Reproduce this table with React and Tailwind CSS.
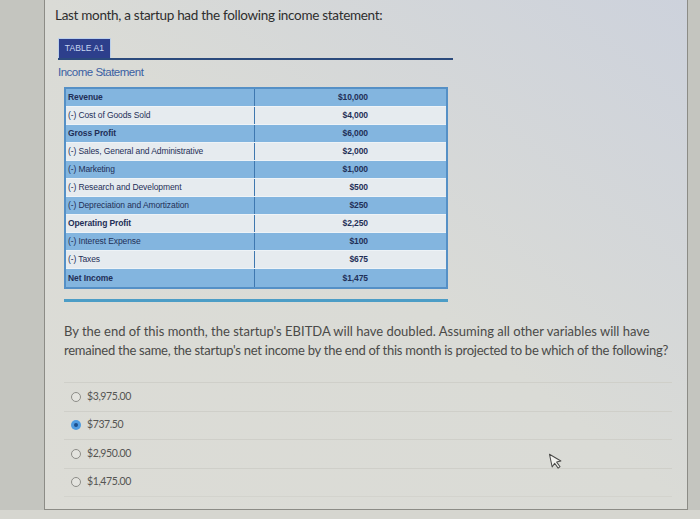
import React from 'react';

const rows = [
  { label: 'Revenue', value: '$10,000', blue: true, bold: true },
  { label: '(-) Cost of Goods Sold', value: '$4,000' },
  { label: 'Gross Profit', value: '$6,000', blue: true, bold: true },
  { label: '(-) Sales, General and Administrative', value: '$2,000' },
  { label: '(-) Marketing', value: '$1,000', blue: true },
  { label: '(-) Research and Development', value: '$500' },
  { label: '(-) Depreciation and Amortization', value: '$250', blue: true },
  { label: 'Operating Profit', value: '$2,250', bold: true },
  { label: '(-) Interest Expense', value: '$100', blue: true },
  { label: '(-) Taxes', value: '$675' },
  { label: 'Net Income', value: '$1,475', blue: true, bold: true },
];

const options = [
  { text: '$3,975.00' },
  { text: '$737.50', selected: true },
  { text: '$2,950.00' },
  { text: '$1,475.00' },
];

function Radio({ selected }) {
  if (selected) {
    return (
      <span className="w-[10px] h-[10px] rounded-full bg-[#4f9be0] flex items-center justify-center shrink-0">
        <span className="w-[4px] h-[4px] rounded-full bg-[#1c4f8c]" />
      </span>
    );
  }
  return <span className="w-[10px] h-[10px] rounded-full border border-[#8d8d88] bg-[#e4e4df] shrink-0" />;
}

export default function App() {
  return (
    <div className="relative w-[700px] h-[519px] overflow-hidden bg-[#c4c5bf] font-['Lato','Liberation_Sans',sans-serif]">
      <div className="ml-[44px] w-[644px] h-[510px] border-l border-r border-b border-[#8c8c86] bg-linear-to-bl from-[#cdd2dc] via-[#dadbd6] to-[#dcdcd6]">
        {/* Title */}
        <div className="pt-[6px] pl-[10px] text-[13.5px] leading-[18px] text-[#2e2e2e] tracking-[-0.3px]">
          Last month, a startup had the following income statement:
        </div>

        {/* Table header */}
        <div className="mt-[14px] ml-[13px] w-[395px] border-b-2 border-[#2b4a7c]">
          <div className="w-[53px] h-[20px] bg-[#2d3f8c] border border-[#bcd0ea] border-b-0 flex items-center justify-center font-['Liberation_Sans',sans-serif] text-[8.5px] text-[#c9d7f2] tracking-[0.1px]">
            TABLE A1
          </div>
        </div>
        <div className="mt-[5px] ml-[13px] text-[11.5px] leading-[14px] text-[#3a5fa3] tracking-[-0.5px] font-['Liberation_Sans',sans-serif]">
          Income Statement
        </div>

        {/* Income statement table */}
        <div className="mt-[8px] ml-[19px] w-[384px] border-2 border-[#5590c6] font-['Liberation_Sans',sans-serif] text-[8.5px] text-[#1f2f57]">
          {rows.map((r) => (
            <div
              key={r.label}
              className={`flex h-[18px] border-b border-[#eef3f7] last:border-b-0 ${r.blue ? 'bg-[#83b5df]' : 'bg-[#e6ebef]'}`}
            >
              <div className={`w-[189px] border-r border-[#3f78b0] pl-[2px] flex items-center tracking-[-0.1px] ${r.bold ? 'font-bold' : ''}`}>
                {r.label}
              </div>
              <div className="flex-1 flex items-center justify-end pr-[78px] font-bold tracking-[-0.1px]">
                {r.value}
              </div>
            </div>
          ))}
        </div>
        <div className="mt-[10px] ml-[19px] w-[384px] h-[3px] bg-[#4c9dc6]" />

        {/* Question */}
        <div className="mt-[20px] ml-[19px] text-[13px] leading-[19px] text-[#4a4a48] whitespace-nowrap">
          <div>By the end of this month, the startup's EBITDA will have doubled. Assuming all other variables will have</div>
          <div className="tracking-[-0.26px]">
            remained the same, the startup's net income by the end of this month is projected to be which of the following?
          </div>
        </div>

        {/* Options */}
        <div className="mt-[22px] ml-[19px] w-[608px]">
          {options.map((o) => (
            <div key={o.text} className="h-[28.5px] border-t border-[#cfcfc9] flex items-center gap-[6px] pl-[7px]">
              <Radio selected={o.selected} />
              <span className="text-[10.5px] text-[#555553] tracking-[-0.4px]">{o.text}</span>
            </div>
          ))}
          <div className="border-t border-[#d3d3cd]" />
        </div>
      </div>
      <div className="h-[9px] bg-[#d6d6d0]" />

      {/* Mouse cursor */}
      <svg className="absolute left-[549px] top-[452px]" width="15" height="18" viewBox="0 0 15 18">
        <path
          d="M2 1 L2 14 L5.2 11 L7.6 16.4 L9.8 15.4 L7.4 10.2 L11.8 10 Z"
          fill="#f2f2ee"
          stroke="#4a4a48"
          strokeWidth="1"
          strokeLinejoin="round"
          transform="rotate(-12 7 9)"
        />
      </svg>
    </div>
  );
}
